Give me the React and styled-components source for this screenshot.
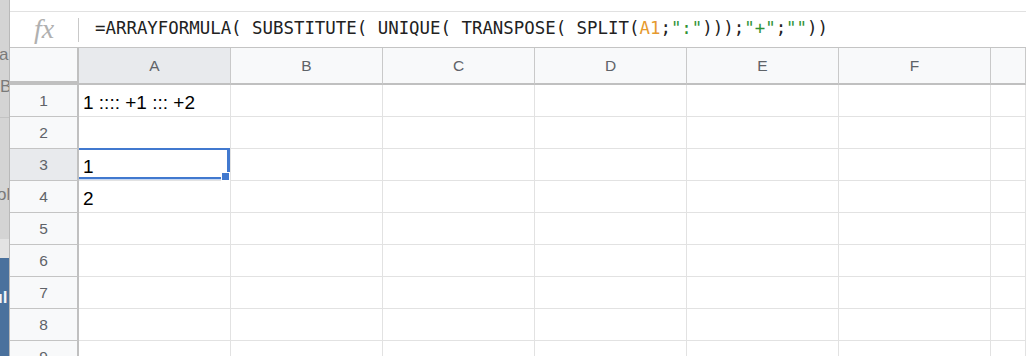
import React from "react";
import styled, { createGlobalStyle } from "styled-components";

const GlobalStyle = createGlobalStyle`
  html, body {
    margin: 0;
    padding: 0;
    background: #ffffff;
  }
  body {
    font-family: "Liberation Sans", Arial, sans-serif;
    overflow: hidden;
  }
`;

const Screen = styled.div`
  display: flex;
  width: 1026px;
  height: 356px;
  overflow: hidden;
`;

/* the window peeking out behind the sheet on the left */
const BackWindow = styled.div`
  width: 9px;
  flex: none;
  border-right: 1px solid #b9b9b9;
  display: flex;
  flex-direction: column;
  overflow: hidden;
  font-size: 17px;
`;

const BackPane = styled.div`
  flex: ${(p) => (p.$h ? `0 0 ${p.$h}px` : "1")};
  background: ${(p) => p.$bg || "#d4d4d4"};
  border-bottom: ${(p) => (p.$line ? "1px solid #c3c3c3" : "none")};
  box-sizing: border-box;
  overflow: hidden;
`;

const BackText = styled.div`
  white-space: nowrap;
  line-height: 16px;
  margin-top: ${(p) => p.$top}px;
  margin-left: ${(p) => p.$shift || 0}px;
  color: ${(p) => (p.$light ? "#f2f5f9" : "#7a7a7a")};
  font-weight: ${(p) => (p.$light ? 700 : 400)};
`;

const Sheet = styled.div`
  flex: 1;
  display: flex;
  flex-direction: column;
  min-width: 0;
`;

const TopGap = styled.div`
  height: 11px;
  flex: none;
  border-bottom: 1px solid #e1e1e1;
`;

const FormulaBar = styled.div`
  height: 35px;
  flex: none;
  display: flex;
  align-items: center;
  border-bottom: 1px solid #c4c4c4;
`;

const FxBox = styled.div`
  width: 68px;
  flex: none;
  text-align: center;
  font-family: "Liberation Serif", "Times New Roman", serif;
  font-style: italic;
  font-size: 28px;
  line-height: 30px;
  color: #b0b0b0;
  margin-top: -2px;
`;

const FxDivider = styled.div`
  width: 1px;
  height: 24px;
  flex: none;
  background: #c9c9c9;
`;

const FormulaText = styled.div`
  margin-left: 16px;
  font-family: "DejaVu Sans Mono", "Liberation Mono", monospace;
  font-size: 17.4px;
  line-height: 20px;
  color: #222;
  white-space: nowrap;
  margin-top: -3px;
`;

const Token = styled.span`
  color: ${(p) =>
    p.$kind === "ref" ? "#e69a2e" : p.$kind === "str" ? "#2f9236" : "inherit"};
`;

const Grid = styled.div`
  display: grid;
  grid-template-columns: 69px repeat(6, 152px) 1fr;
  grid-template-rows: 37px;
  grid-auto-rows: 32px;
`;

const Corner = styled.div`
  box-sizing: border-box;
  background: #f8f9fa;
  border-right: 2px solid #c0c0c0;
  border-bottom: 4px solid #c0c0c0;
`;

const ColHeader = styled.div`
  box-sizing: border-box;
  display: flex;
  align-items: center;
  justify-content: center;
  background: ${(p) => (p.$active ? "#e8eaed" : "#f8f9fa")};
  border-right: 1px solid #c9c9c9;
  border-bottom: 2px solid #c0c0c0;
  color: #5f6368;
  font-size: 15.5px;
`;

const RowHeader = styled.div`
  box-sizing: border-box;
  display: flex;
  align-items: center;
  justify-content: center;
  background: ${(p) => (p.$active ? "#e8eaed" : "#f8f9fa")};
  border-right: 2px solid #c0c0c0;
  border-bottom: 1px solid #c4c4c4;
  color: #5f6368;
  font-size: 15.5px;
`;

const Cell = styled.div`
  position: relative;
  box-sizing: border-box;
  display: flex;
  align-items: flex-end;
  padding: 0 4px 2px;
  border-right: 1px solid #e2e2e2;
  border-bottom: 1px solid #e2e2e2;
  font-size: 19px;
  line-height: 22px;
  color: #000;
  white-space: nowrap;
`;

const Selection = styled.div`
  position: absolute;
  top: -1px;
  left: 0;
  right: 0;
  bottom: 1px;
  border-top: 2px solid #4179cf;
  border-right: 3px solid #4179cf;
  border-bottom: 2px solid #4179cf;
  box-shadow: 0 1px 0 #c8d9f3;
  pointer-events: none;
`;

const FillHandle = styled.div`
  position: absolute;
  right: -3px;
  bottom: -4px;
  width: 7px;
  height: 7px;
  background: #4179cf;
  border: 1px solid #ffffff;
`;

const columns = ["A", "B", "C", "D", "E", "F", ""];
const values = { 1: "1 :::: +1 ::: +2", 3: "1", 4: "2" };
const rows = [1, 2, 3, 4, 5, 6, 7, 8, 9];
const activeRow = 3;

const Formula = () => (
  <FormulaText>
    =ARRAYFORMULA( SUBSTITUTE( UNIQUE( TRANSPOSE( SPLIT(
    <Token $kind="ref">A1</Token>;<Token $kind="str">":"</Token>)));
    <Token $kind="str">"+"</Token>;<Token $kind="str">""</Token>))
  </FormulaText>
);

const App = () => {
  return (
    <Screen>
      <GlobalStyle />
      <BackWindow>
        <BackPane $h={118} $line>
          <BackText $top={47} $shift={-1}>a.</BackText>
          <BackText $top={16} $shift={0}>Bo</BackText>
        </BackPane>
        <BackPane $h={121}>
          <BackText $top={69} $shift={-3}>ol</BackText>
        </BackPane>
        <BackPane $h={19} $bg="#e3e3e3" />
        <BackPane $bg="#4a719d">
          <BackText $top={32} $shift={-2} $light>
            ıl
          </BackText>
        </BackPane>
      </BackWindow>

      <Sheet>
        <TopGap />
        <FormulaBar>
          <FxBox>fx</FxBox>
          <FxDivider />
          <Formula />
        </FormulaBar>
        <Grid>
          <Corner />
          {columns.map((c, i) => (
            <ColHeader key={`h${i}`} $active={c === "A"}>
              {c}
            </ColHeader>
          ))}
          {rows.map((r) => (
            <React.Fragment key={r}>
              <RowHeader $active={r === activeRow}>{r}</RowHeader>
              {columns.map((c, i) => (
                <Cell key={`${r}${i}`}>
                  {c === "A" ? values[r] : null}
                  {c === "A" && r === activeRow && (
                    <Selection>
                      <FillHandle />
                    </Selection>
                  )}
                </Cell>
              ))}
            </React.Fragment>
          ))}
        </Grid>
      </Sheet>
    </Screen>
  );
};

export default App;
